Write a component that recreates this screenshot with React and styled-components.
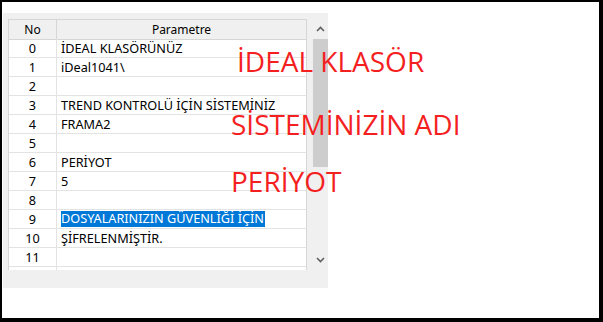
import React from 'react';
import styled, { createGlobalStyle } from 'styled-components';

const GlobalStyle = createGlobalStyle`
  html, body {
    margin: 0;
    padding: 0;
    background: #000;
  }
`;

// Outer black frame of the screenshot
const Frame = styled.div`
  width: 603px;
  height: 322px;
  box-sizing: border-box;
  padding: 2px 4px 4px 2px;
  background: #000;
`;

const Canvas = styled.div`
  position: relative;
  height: 100%;
  background: #fff;
  padding: 11px 0 0 1px;
  box-sizing: border-box;
  font-family: 'Noto Sans', 'Open Sans', sans-serif;
`;

const Panel = styled.div`
  width: 325px;
  height: 275px;
  box-sizing: border-box;
  background: #f0f0f0;
  padding: 6px 0 0 5px;
  display: flex;
  gap: 6px;
`;

const Table = styled.div`
  width: 299px;
  height: 251px;
  box-sizing: border-box;
  border: 1px solid #d6d6d6;
  border-bottom: none;
  background: #fff;
  overflow: hidden;
  display: grid;
  grid-template-columns: 48px 1fr;
  grid-auto-rows: 19px;
  font-size: 12.7px;
  color: #000;
`;

const Head = styled.div`
  height: 19px;
  background: #f0f0f0;
  border-bottom: 1px solid #d6d6d6;
  border-right: ${p => (p.$last ? 'none' : '1px solid #d6d6d6')};
  display: flex;
  align-items: center;
  justify-content: center;
  font-size: 12px;
  line-height: 1;
`;

const Cell = styled.div`
  height: 18px;
  border-bottom: 1px solid #e3e3e3;
  border-right: ${p => (p.$last ? 'none' : '1px solid #e3e3e3')};
  display: flex;
  align-items: center;
  justify-content: ${p => (p.$center ? 'center' : 'flex-start')};
  padding-left: ${p => (p.$center ? '0' : '4px')};
  white-space: nowrap;
  line-height: 1;
`;

const Selected = styled.span`
  background: #0078d7;
  color: #fff;
  padding: 1px 1px 2px 0;
`;

const Scrollbar = styled.div`
  width: 15px;
  height: 251px;
  background: #f0f0f0;
  display: flex;
  flex-direction: column;
`;

const Arrow = styled.div`
  height: 20px;
  display: flex;
  align-items: center;
  justify-content: center;
`;

const Thumb = styled.div`
  height: 128px;
  background: #cdcdcd;
`;

const Track = styled.div`
  flex: 1;
`;

const Label = styled.div`
  position: absolute;
  left: ${p => p.$x}px;
  top: ${p => p.$y}px;
  font-family: 'Open Sans', 'Noto Sans', sans-serif;
  font-size: 28px;
  color: #f41f1f;
  white-space: nowrap;
  line-height: 1;
`;

const Chevron = ({ up }) => (
  <svg width="9" height="6" viewBox="0 0 9 6">
    <path
      d={up ? 'M1 5 L4.5 1.5 L8 5' : 'M1 1 L4.5 4.5 L8 1'}
      fill="none"
      stroke="#606060"
      strokeWidth="1.6"
    />
  </svg>
);

const rows = [
  'İDEAL KLASÖRÜNÜZ',
  'iDeal1041\\',
  '',
  'TREND KONTROLÜ İÇİN SİSTEMİNİZ',
  'FRAMA2',
  '',
  'PERİYOT',
  '5',
  '',
  'DOSYALARINIZIN GÜVENLİĞİ İÇİN',
  'ŞİFRELENMİŞTİR.',
  '',
];

export default function App() {
  return (
    <>
      <GlobalStyle />
      <Frame>
        <Canvas>
          <Panel>
            <Table>
              <Head>No</Head>
              <Head $last>Parametre</Head>
              {rows.map((text, i) => (
                <React.Fragment key={i}>
                  <Cell $center>{i}</Cell>
                  <Cell $last>
                    {i === 9 ? <Selected>{text}</Selected> : text}
                  </Cell>
                </React.Fragment>
              ))}
              {/* next row, only its top edge shows */}
              <Cell $center />
              <Cell $last />
            </Table>
            <Scrollbar>
              <Arrow><Chevron up /></Arrow>
              <Thumb />
              <Track />
              <Arrow><Chevron /></Arrow>
            </Scrollbar>
          </Panel>
          <Label $x={235} $y={45}>İDEAL KLASÖR</Label>
          <Label $x={229} $y={108}>SİSTEMİNİZİN ADI</Label>
          <Label $x={229} $y={165}>PERİYOT</Label>
        </Canvas>
      </Frame>
    </>
  );
}
